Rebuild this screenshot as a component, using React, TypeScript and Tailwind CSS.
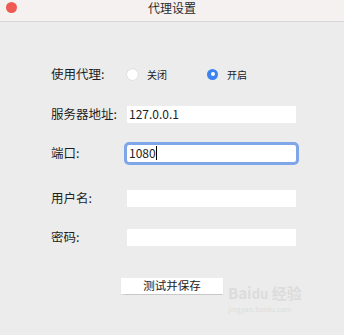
import React from 'react';

const font = { fontFamily: '"Noto Sans CJK SC", "Noto Sans", sans-serif' };

const Radio: React.FC<{ checked?: boolean; label: string }> = ({ checked, label }) => (
  <div className="flex items-center gap-[9px]">
    {checked ? (
      <span className="w-[11px] h-[11px] rounded-full bg-[#3c82f0] flex items-center justify-center">
        <span className="w-[4px] h-[4px] rounded-full bg-white" />
      </span>
    ) : (
      <span className="w-[11px] h-[11px] rounded-full bg-white shadow-[0_0_0_0.5px_rgba(0,0,0,0.12)]" />
    )}
    <span className="text-[10px] text-[#222]">{label}</span>
  </div>
);

const Field: React.FC<{ value?: string; focused?: boolean }> = ({ value, focused }) => (
  <div
    className={
      'w-[169px] h-[17px] bg-white flex items-center px-[2px] text-[12px] text-[#222] ' +
      (focused ? 'outline outline-[3px] outline-[#7fa6e8] rounded-[2px]' : '')
    }
  >
    {value}
    {focused && <span className="w-px h-[14px] bg-black" />}
  </div>
);

export default function App() {
  return (
    <div className="w-[344px] h-[335px] bg-[#ececec] relative overflow-hidden" style={font}>
      {/* title bar */}
      <div className="h-[22px] bg-[#f5f1f1] border-b border-[#d8d6d6] flex items-center relative">
        <span className="absolute left-[6px] top-[2px] w-[11px] h-[11px] rounded-full bg-[#ee5a52]" />
        <div className="flex-1 text-center text-[12px] text-[#2a2a2a] -mt-[5px]">代理设置</div>
      </div>

      <div className="pl-[51px] pt-[43px] text-[12.5px] text-[#1e1e1e]">
        <div className="h-[18px] flex items-center">
          <span className="w-[76px]">使用代理:</span>
          <div className="flex items-center gap-[40px]">
            <Radio label="关闭" />
            <Radio checked label="开启" />
          </div>
        </div>

        <div className="h-[18px] flex items-center mt-[22px]">
          <span className="w-[76px]">服务器地址:</span>
          <Field value="127.0.0.1" />
        </div>

        <div className="h-[18px] flex items-center mt-[21px]">
          <span className="w-[76px]">端口:</span>
          <Field value="1080" focused />
        </div>

        <div className="h-[18px] flex items-center mt-[27px]">
          <span className="w-[76px]">用户名:</span>
          <Field />
        </div>

        <div className="h-[18px] flex items-center mt-[21px]">
          <span className="w-[76px]">密码:</span>
          <Field />
        </div>

        <div className="mt-[32px] ml-[70px]">
          <button className="w-[102px] h-[16px] bg-white text-[11.5px] text-[#222] flex items-center justify-center shadow-[0_0.5px_1px_rgba(0,0,0,0.15)]">
            测试并保存
          </button>
        </div>
      </div>

      {/* watermark */}
      <div className="absolute left-[228px] top-[285px] text-[#dcdcdc] text-[15px] font-bold leading-none select-none">
        Bai<span className="text-[13px]">du</span> 经验
        <div className="text-[7px] font-normal mt-[6px] tracking-wide">jingyan.baidu.com</div>
      </div>
    </div>
  );
}
